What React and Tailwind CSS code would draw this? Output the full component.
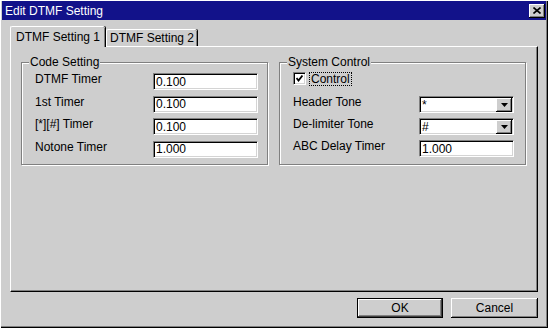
import { useState } from 'react'

const font = { fontFamily: '"Liberation Sans", Arial, sans-serif' }

// sunken white field, classic win32 look
function Field({ value, className = '' }) {
  return (
    <div
      className={`flex h-[17px] items-center bg-white pl-[2px] text-[12px] leading-[14px] text-black border-t border-l border-[#808080] border-r border-b border-r-white border-b-white shadow-[inset_1px_1px_0_#000,inset_-1px_-1px_0_#d4d4d4] ${className}`}
    >
      {value}
    </div>
  )
}

function Select({ value }) {
  return (
    <div className="flex h-[17px] w-[95px] items-center bg-white pl-[2px] text-[12px] leading-[14px] text-black border-t border-l border-[#808080] border-r border-b border-r-white border-b-white shadow-[inset_1px_1px_0_#000,inset_-1px_-1px_0_#d4d4d4]">
      <span className="flex-1">{value}</span>
      <div className="mr-[1px] flex h-[14px] w-[16px] items-center justify-center bg-[#cecece] shadow-[inset_-1px_-1px_0_#000,inset_1px_1px_0_#fff,inset_-2px_-2px_0_#808080]">
        <svg width="7" height="4" viewBox="0 0 7 4">
          <path d="M0 0h7L3.5 4z" fill="#000" />
        </svg>
      </div>
    </div>
  )
}

function Group({ title, className = '', children }) {
  return (
    <div
      className={`relative h-[103px] w-[247px] border border-[#808080] shadow-[1px_1px_0_#fff,inset_1px_1px_0_#fff] ${className}`}
    >
      <span className="absolute left-[7px] top-[-8px] bg-[#cecece] px-[1px] text-[12px] leading-[14px] text-black">
        {title}
      </span>
      {children}
    </div>
  )
}

function Row({ label, children, height = 'h-[22.5px]' }) {
  return (
    <div className={`flex items-start ${height}`}>
      <span className="-mt-[1px] text-[12px] leading-[14px] text-black">{label}</span>
      <div className="ml-auto">{children}</div>
    </div>
  )
}

function Button({ children, isDefault, className = '' }) {
  return (
    <button
      className={`flex h-[20px] items-center justify-center bg-[#cecece] text-[12px] leading-[14px] text-black ${
        isDefault
          ? 'border border-black shadow-[inset_-1px_-1px_0_#404040,inset_1px_1px_0_#fff,inset_-2px_-2px_0_#808080]'
          : 'shadow-[inset_-1px_-1px_0_#000,inset_1px_1px_0_#fff,inset_-2px_-2px_0_#808080]'
      } ${className}`}
    >
      {children}
    </button>
  )
}

export default function App() {
  const [tab, setTab] = useState(1)

  return (
    <div
      className="flex h-[328px] w-[548px] flex-col bg-[#cecece] px-[2px] pt-[1px] shadow-[inset_1px_1px_0_#fff,inset_-1px_-1px_0_#000,inset_-2px_-2px_0_#808080]"
      style={font}
    >
      {/* title bar */}
      <div className="flex h-[19px] items-center bg-[#12128a] pl-[3px] pr-[1px]">
        <span className="text-[12px] leading-[14px] text-white">Edit DTMF Setting</span>
        <div className="ml-auto flex h-[14px] w-[16px] items-center justify-center bg-[#cecece] shadow-[inset_-1px_-1px_0_#000,inset_1px_1px_0_#fff,inset_-2px_-2px_0_#808080]">
          <svg width="8" height="7" viewBox="0 0 8 7">
            <path d="M0.5 0.5l7 6M7.5 0.5l-7 6" stroke="#000" strokeWidth="1.6" />
          </svg>
        </div>
      </div>

      {/* tabs */}
      <div className="ml-[8px] mt-[6px] flex h-[20px] items-end">
        <button
          onClick={() => setTab(1)}
          className={`relative z-10 flex w-[95px] items-start justify-center rounded-t-[2px] bg-[#cecece] pt-[3px] text-[12px] leading-[14px] text-black border-t border-l border-white shadow-[inset_-1px_0_0_#808080,1px_0_0_#000] ${
            tab === 1 ? '-mb-[1px] h-[21px]' : 'h-[17px]'
          }`}
        >
          DTMF Setting 1
        </button>
        <button
          onClick={() => setTab(2)}
          className={`ml-[1px] flex w-[91px] items-start justify-center rounded-t-[2px] bg-[#cecece] pt-[1px] text-[12px] leading-[14px] text-black border-t border-l border-white shadow-[inset_-1px_0_0_#808080,1px_0_0_#000] ${
            tab === 2 ? '-mb-[1px] h-[21px]' : 'h-[17px]'
          }`}
        >
          DTMF Setting 2
        </button>
      </div>

      {/* panel */}
      <div className="ml-[8px] h-[246px] w-[528px] border-t border-l border-white border-r border-b border-r-black border-b-black shadow-[inset_-1px_-1px_0_#808080]">
        {tab === 1 && (
          <div className="ml-[10px] mt-[15px] flex gap-[11px]">
            <Group title="Code Setting">
              <div className="pl-[13px] pr-[9px] pt-[10px]">
                <Row label="DTMF Timer">
                  <Field value="0.100" className="w-[105px]" />
                </Row>
                <Row label="1st Timer">
                  <Field value="0.100" className="w-[105px]" />
                </Row>
                <Row label="[*][#] Timer">
                  <Field value="0.100" className="w-[105px]" />
                </Row>
                <Row label="Notone Timer">
                  <Field value="1.000" className="w-[105px]" />
                </Row>
              </div>
            </Group>
            <Group title="System Control">
              <div className="pl-[13px] pr-[11px] pt-[9px]">
                <div className="flex h-[24px] items-start">
                  <div className="flex h-[13px] w-[13px] items-center justify-center bg-white border-t border-l border-[#808080] border-r border-b border-r-white border-b-white shadow-[inset_1px_1px_0_#000,inset_-1px_-1px_0_#d4d4d4]">
                    <svg width="7" height="7" viewBox="0 0 7 7">
                      <path d="M0.5 3l2 2.5L6.5 0.5" stroke="#000" strokeWidth="1.8" fill="none" />
                    </svg>
                  </div>
                  <span className="ml-[3px] border border-dotted border-black px-[1px] text-[12px] leading-[12px] text-black">
                    Control
                  </span>
                </div>
                <Row label="Header Tone" height="h-[22px]">
                  <Select value="*" />
                </Row>
                <Row label="De-limiter Tone" height="h-[22px]">
                  <Select value="#" />
                </Row>
                <Row label="ABC Delay Timer" height="h-[22px]">
                  <Field value="1.000" className="w-[95px]" />
                </Row>
              </div>
            </Group>
          </div>
        )}
      </div>

      {/* buttons */}
      <div className="ml-[8px] mt-[6px] flex w-[528px] justify-end gap-[8px]">
        <Button isDefault className="w-[86px]">
          OK
        </Button>
        <Button className="w-[87px]">Cancel</Button>
      </div>
    </div>
  )
}
